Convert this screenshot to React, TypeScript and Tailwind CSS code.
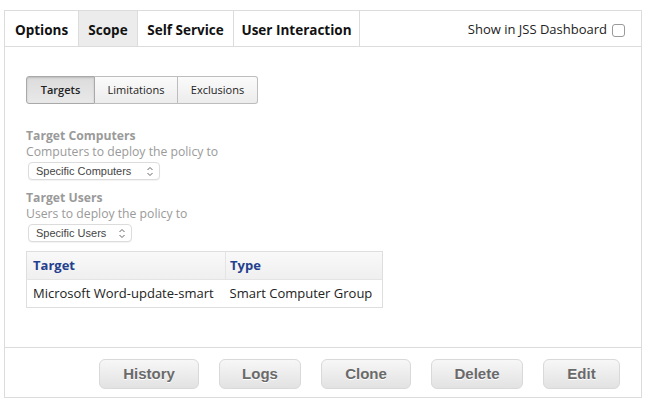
import { ReactNode } from "react";

const lucida = { fontFamily: '"Open Sans", "DejaVu Sans", sans-serif' };

const Chevrons = () => (
  <svg width="8" height="11" viewBox="0 0 8 11" className="ml-auto">
    <path d="M1.5 4 L4 1.5 L6.5 4 M1.5 7 L4 9.5 L6.5 7" fill="none" stroke="#666" strokeWidth="1" />
  </svg>
);

const Select = ({ label, w }: { label: string; w: string }) => (
  <div
    className={`ml-[2px] mt-[2px] flex h-[18px] items-center rounded-[4px] border border-[#dcdcdc] bg-white pl-[7px] pr-[5px] text-[11px] text-[#444] shadow-[0_1px_1px_rgba(0,0,0,0.05)] ${w}`}
    style={{ fontFamily: '"Liberation Sans", Arial, sans-serif' }}
  >
    {label}
    <Chevrons />
  </div>
);

const Field = ({ title, hint, children }: { title: string; hint: string; children: ReactNode }) => (
  <div className="flex flex-col">
    <div className="text-[12.2px] font-bold leading-[16px] text-[#9a9a9a]">{title}</div>
    <div className="text-[12.2px] leading-[16px] text-[#9a9a9a]">{hint}</div>
    {children}
  </div>
);

const FootButton = ({ label, w }: { label: string; w: string }) => (
  <button
    className={`h-[30px] rounded-[6px] border border-[#d9d9d9] bg-gradient-to-b from-[#f7f7f7] to-[#e2e2e2] text-[15px] font-bold text-[#6a6a6a] [text-shadow:0_1px_0_#fff] ${w}`}
    style={{ fontFamily: '"Liberation Sans", Arial, sans-serif' }}
  >
    {label}
  </button>
);

export default function App() {
  return (
    <div className="h-[406px] w-[648px] bg-white pl-[4px] pt-[10px]" style={lucida}>
      <div className="flex h-[388px] w-[638px] flex-col border border-[#dcdcdc]">
        <div className="flex h-[36px] items-stretch whitespace-nowrap border-b border-[#dcdcdc] text-[13.5px] font-bold text-[#111]">
          <div className="flex w-[74px] items-center justify-center border-r border-[#dcdcdc] pt-[3px]">Options</div>
          <div className="flex w-[59px] items-center justify-center border-r border-[#dcdcdc] bg-[#ececec] pt-[3px]">Scope</div>
          <div className="flex w-[96px] items-center justify-center border-r border-[#dcdcdc] pt-[3px]">Self Service</div>
          <div className="flex w-[126px] items-center justify-center border-r border-[#dcdcdc] pt-[3px]">User Interaction</div>
          <div className="ml-auto flex items-center gap-[5px] pr-[16px] pt-[3px] text-[13px] font-normal text-[#222]">
            Show in JSS Dashboard
            <span className="h-[13px] w-[13px] rounded-[3px] border border-[#9a9a9a] bg-white" />
          </div>
        </div>

        <div className="flex h-[300px] flex-col pl-[21px] pt-[29px]">
          <div className="flex h-[28px] text-[11px] text-[#222]">
            <div className="flex w-[69px] items-center justify-center rounded-l-[3px] border border-[#a9a9a9] bg-gradient-to-b from-[#dcdcdc] to-[#e9e9e9] font-semibold shadow-[inset_0_1px_2px_rgba(0,0,0,0.15)]">
              Targets
            </div>
            <div className="flex w-[83px] items-center justify-center border-y border-r border-[#bdbdbd] bg-gradient-to-b from-[#fbfbfb] to-[#ececec]">
              Limitations
            </div>
            <div className="flex w-[80px] items-center justify-center rounded-r-[3px] border-y border-r border-[#bdbdbd] bg-gradient-to-b from-[#fbfbfb] to-[#ececec]">
              Exclusions
            </div>
          </div>

          <div className="mt-[24px] flex flex-col gap-[10px]">
            <Field title="Target Computers" hint="Computers to deploy the policy to">
              <Select label="Specific Computers" w="w-[132px]" />
            </Field>
            <Field title="Target Users" hint="Users to deploy the policy to">
              <Select label="Specific Users" w="w-[104px]" />
            </Field>
          </div>

          <table className="mt-[9px] w-[357px] border border-[#dedede] text-[13px]">
            <thead>
              <tr className="h-[28px] bg-gradient-to-b from-[#f9f9f9] to-[#efefef] text-left text-[#23408e]">
                <th className="w-[199px] pl-[6px] font-bold">Target</th>
                <th className="border-l border-[#e4e4e4] pl-[4px] font-bold">Type</th>
              </tr>
            </thead>
            <tbody>
              <tr className="h-[28px] border-t border-[#e4e4e4] text-[#222]">
                <td className="whitespace-nowrap pl-[6px]">Microsoft Word-update-smart</td>
                <td className="whitespace-nowrap pl-[4px]">Smart Computer Group</td>
              </tr>
            </tbody>
          </table>
        </div>

        <div className="flex flex-1 items-start border-t border-[#dcdcdc] pl-[94px] pt-[11px]">
          <div className="flex gap-[20px]">
            <FootButton label="History" w="w-[100px]" />
            <FootButton label="Logs" w="w-[82px]" />
            <FootButton label="Clone" w="w-[90px]" />
            <FootButton label="Delete" w="w-[92px]" />
            <FootButton label="Edit" w="w-[77px]" />
          </div>
        </div>
      </div>
    </div>
  );
}
